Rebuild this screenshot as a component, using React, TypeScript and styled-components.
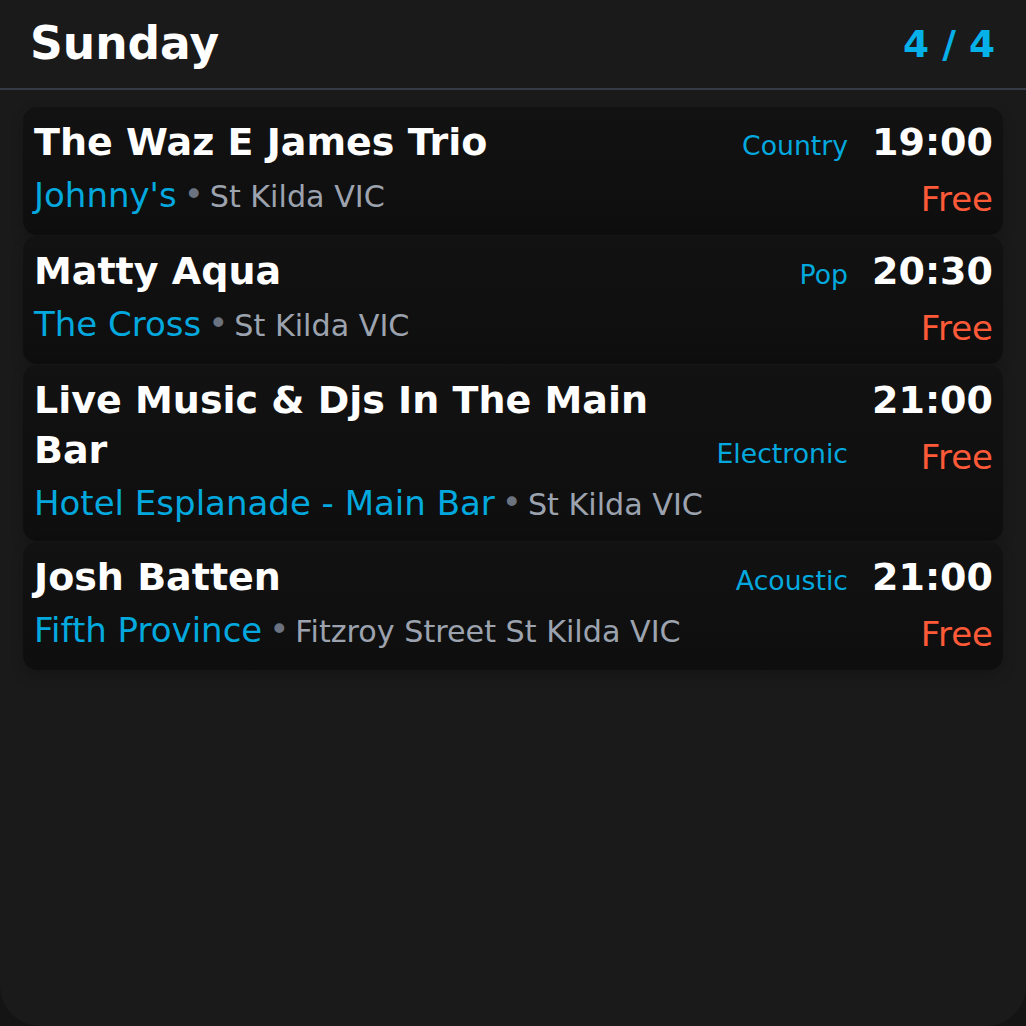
import React from "react";
import styled, { createGlobalStyle } from "styled-components";

const GlobalStyle = createGlobalStyle`
  html, body {
    margin: 0;
    padding: 0;
    background: #141414;
  }
  body {
    font-family: "DejaVu Sans", "Noto Sans", sans-serif;
  }
  * { box-sizing: border-box; }
`;

type Gig = {
  title: string;
  venue: string;
  location: string;
  genre: string;
  time: string;
  price: string;
};

const gigs: Gig[] = [
  { title: "The Waz E James Trio", venue: "Johnny's", location: "St Kilda VIC", genre: "Country", time: "19:00", price: "Free" },
  { title: "Matty Aqua", venue: "The Cross", location: "St Kilda VIC", genre: "Pop", time: "20:30", price: "Free" },
  { title: "Live Music & Djs In The Main Bar", venue: "Hotel Esplanade - Main Bar", location: "St Kilda VIC", genre: "Electronic", time: "21:00", price: "Free" },
  { title: "Josh Batten", venue: "Fifth Province", location: "Fitzroy Street St Kilda VIC", genre: "Acoustic", time: "21:00", price: "Free" },
];

const Screen = styled.div`
  width: 1026px;
  height: 1026px;
  background: #1a1a1a;
  border-radius: 0 0 40px 40px;
  overflow: hidden;
  display: flex;
  flex-direction: column;
`;

const Header = styled.header`
  height: 90px;
  flex: none;
  display: flex;
  align-items: center;
  justify-content: space-between;
  padding: 0 31px 1px 30px;
  border-bottom: 2px solid #363c47;
`;

const DayTitle = styled.h1`
  margin: 0;
  font-size: 45.5px;
  font-weight: 700;
  color: #ffffff;
  line-height: normal;
`;

const Counter = styled.span`
  font-size: 37.5px;
  font-weight: 700;
  color: #06b0e8;
  line-height: normal;
`;

const List = styled.div`
  display: flex;
  flex-direction: column;
  gap: 1px;
  padding: 17px 23px 0 23px;
`;

const Card = styled.div`
  display: flex;
  gap: 24px;
  padding: 10px 10px 11px 11px;
  border-radius: 14px;
  background: linear-gradient(180deg, #121212 0%, #0e0e0e 100%);
  box-shadow: 0 6px 14px rgba(0, 0, 0, 0.18);
`;

const Main = styled.div`
  flex: 1;
  min-width: 0;
  display: flex;
  flex-direction: column;
`;

const TitleRow = styled.div`
  display: flex;
  align-items: last baseline;
  gap: 14px;
`;

const Title = styled.div`
  flex: 1;
  min-width: 0;
  font-size: 38px;
  font-weight: 700;
  line-height: 50px;
  color: #ffffff;
`;

const Genre = styled.span`
  flex: none;
  font-size: 26.7px;
  line-height: 32px;
  color: #03a9de;
`;

const VenueLine = styled.div`
  margin-top: 3px;
  font-size: 34px;
  line-height: 50px;
  white-space: nowrap;
`;

const Venue = styled.span`
  color: #03a9de;
`;

const Dot = styled.span`
  color: #6b7280;
  font-size: 34px;
  margin: 0 6px 0 7px;
  position: relative;
  top: -1px;
`;

const Location = styled.span`
  font-size: 30.2px;
  color: #9ca3af;
`;

const Side = styled.div`
  flex: none;
  display: flex;
  flex-direction: column;
  align-items: flex-end;
`;

const Time = styled.div`
  font-size: 38px;
  font-weight: 700;
  line-height: 50px;
  color: #ffffff;
`;

const Price = styled.div`
  margin-top: 7px;
  font-size: 34px;
  line-height: 50px;
  color: #ff5a38;
`;

export default function App() {
  return (
    <>
      <GlobalStyle />
      <Screen>
        <Header>
          <DayTitle>Sunday</DayTitle>
          <Counter>4 / 4</Counter>
        </Header>
        <List>
          {gigs.map((g, i) => (
            <Card key={i}>
              <Main>
                <TitleRow>
                  <Title>{g.title}</Title>
                  <Genre>{g.genre}</Genre>
                </TitleRow>
                <VenueLine>
                  <Venue>{g.venue}</Venue>
                  <Dot>•</Dot>
                  <Location>{g.location}</Location>
                </VenueLine>
              </Main>
              <Side>
                <Time>{g.time}</Time>
                <Price>{g.price}</Price>
              </Side>
            </Card>
          ))}
        </List>
      </Screen>
    </>
  );
}
